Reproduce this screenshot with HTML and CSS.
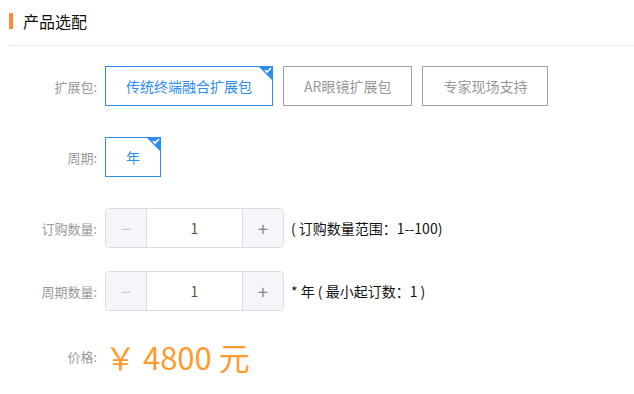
FILE: index.html
```html
<!DOCTYPE html>
<html lang="zh-CN">
<head>
    <meta charset="UTF-8">
    <title>产品选配</title>
    <link rel="stylesheet" href="styles.css">
</head>
<body>
    <div class="panel">
        <div class="panel-title">
            <span class="bar"></span>
            <h2>产品选配</h2>
        </div>

        <div class="form-row first">
            <label>扩展包:</label>
            <div class="options">
                <span class="opt active">传统终端融合扩展包
                    <svg class="corner" width="15" height="15" viewBox="0 0 15 15"><polygon points="0,0 15,0 15,15" fill="#2d8cf0"/><polyline points="7,4 9,6 13,2" fill="none" stroke="#fff" stroke-width="1.6"/></svg>
                </span>
                <span class="opt">AR眼镜扩展包</span>
                <span class="opt">专家现场支持</span>
            </div>
        </div>

        <div class="form-row period">
            <label>周期:</label>
            <div class="options">
                <span class="opt active">年
                    <svg class="corner" width="15" height="15" viewBox="0 0 15 15"><polygon points="0,0 15,0 15,15" fill="#2d8cf0"/><polyline points="7,4 9,6 13,2" fill="none" stroke="#fff" stroke-width="1.6"/></svg>
                </span>
            </div>
        </div>

        <div class="form-row count">
            <label>订购数量:</label>
            <div class="stepper">
                <span class="step minus">&minus;</span>
                <span class="value">1</span>
                <span class="step plus">+</span>
            </div>
            <span class="note">( 订购数量范围：1--100)</span>
        </div>

        <div class="form-row cycles">
            <label>周期数量:</label>
            <div class="stepper">
                <span class="step minus">&minus;</span>
                <span class="value">1</span>
                <span class="step plus">+</span>
            </div>
            <span class="note">* 年 ( 最小起订数：1 )</span>
        </div>

        <div class="form-row price">
            <label>价格:</label>
            <span class="amount">￥ 4800 元</span>
        </div>
    </div>
</body>
</html>
```

FILE: styles.css
```css
body {
    margin: 0;
    padding: 0;
    background-color: #fff;
    font-family: "Noto Sans CJK SC", "Liberation Sans", sans-serif;
    color: #333;
}

.panel-title {
    display: flex;
    align-items: center;
    height: 45px;
    margin-left: 9px;
    border-bottom: 1px solid #eeeeee;
}

.bar {
    width: 4px;
    height: 16px;
    background-color: #ff8a3d;
    margin-right: 10px;
    margin-top: -4px;
}

.panel-title h2 {
    margin: 0;
    font-size: 16px;
    font-weight: normal;
    color: #111;
    margin-top: -3px;
}

.form-row {
    display: flex;
    align-items: center;
    height: 40px;
}

.form-row label {
    width: 97px;
    margin-right: 8px;
    text-align: right;
    font-size: 13px;
    color: #999;
}

.first { margin-top: 20px; }
.period { margin-top: 31px; }
.count { margin-top: 31px; }
.cycles { margin-top: 23px; }
.price { margin-top: 25px; }

.options {
    display: flex;
    gap: 10px;
}

.opt {
    position: relative;
    box-sizing: border-box;
    height: 40px;
    line-height: 38px;
    padding: 0 20px;
    border: 1px solid #a0a0a0;
    font-size: 14px;
    color: #999;
    white-space: nowrap;
}

.opt.active {
    border-color: #2d8cf0;
    color: #2d8cf0;
}

.corner {
    position: absolute;
    top: -1px;
    right: -1px;
}

.stepper {
    display: flex;
    box-sizing: border-box;
    width: 179px;
    height: 40px;
    border: 1px solid #dcdee2;
    border-radius: 4px;
    overflow: hidden;
}

.step {
    width: 40px;
    background-color: #f5f6fa;
    text-align: center;
    line-height: 38px;
    font-size: 18px;
    color: #888;
}

.step.minus {
    color: #c8cad0;
    border-right: 1px solid #dcdee2;
}

.step.plus {
    border-left: 1px solid #dcdee2;
}

.value {
    flex: 1;
    text-align: center;
    line-height: 38px;
    font-size: 14px;
    color: #555;
}

.note {
    margin-left: 7px;
    font-size: 14px;
    color: #111;
}

.amount {
    font-size: 31px;
    color: #ff9a2e;
}
```
